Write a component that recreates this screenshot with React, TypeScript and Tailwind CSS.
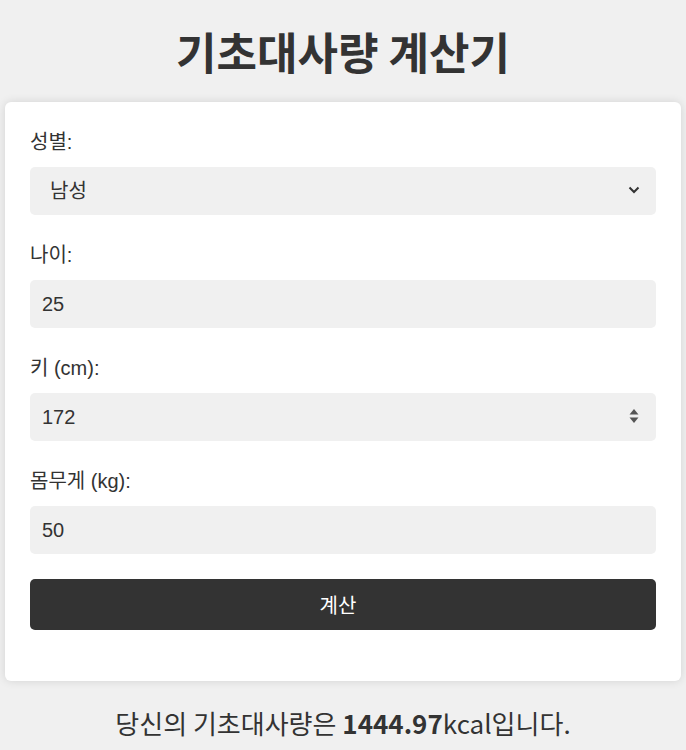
import React from "react";

const font = { fontFamily: '"Liberation Sans", "Noto Sans CJK KR", sans-serif' };

function Field({ label, children, last }: { label: React.ReactNode; children: React.ReactNode; last?: boolean }) {
  return (
    <div className={last ? "mb-[25px]" : "mb-[28px]"}>
      <div className="text-[20px] leading-[24px] mb-[13px] text-[#333]">{label}</div>
      {children}
    </div>
  );
}

function Box({ value, right, pad = "pl-[12px]" }: { value: string; right?: React.ReactNode; pad?: string }) {
  return (
    <div className={`relative h-[48px] rounded-[5px] bg-[#f0f0f0] flex items-center ${pad} text-[20px] text-[#333]`}>
      <input
        readOnly
        value={value}
        className="w-full bg-transparent outline-none border-0 p-0 text-[20px] text-[#333]"
        style={font}
      />
      {right}
    </div>
  );
}

export default function App() {
  return (
    <div className="min-h-[750px] bg-[#f0f0f0] text-[#333]" style={font}>
      <h1
        className="text-center text-[44px] leading-[48px] font-bold pt-[27px] mb-[27px] text-[#333]"
        style={{ fontFamily: '"Noto Sans CJK KR", sans-serif' }}
      >
        기초대사량 계산기
      </h1>
      <div className="mx-[5px] bg-white rounded-[6px] shadow-[0_0_10px_rgba(0,0,0,0.12)] px-[25px] pt-[28px] pb-[51px]">
        <Field label="성별:">
          <Box
            value="남성"
            pad="pl-[20px]"
            right={
              <svg className="absolute right-[16px] top-[19px]" width="12" height="8" viewBox="0 0 12 8">
                <path d="M1.5 1.5 L6 6 L10.5 1.5" fill="none" stroke="#333" strokeWidth="2" />
              </svg>
            }
          />
        </Field>
        <Field label="나이:">
          <Box value="25" />
        </Field>
        <Field label="키 (cm):">
          <Box
            value="172"
            right={
              <svg className="absolute right-[17px] top-[15px]" width="10" height="16" viewBox="0 0 10 16">
                <path d="M5 1 L9.5 6.5 L0.5 6.5 Z" fill="#555" />
                <path d="M5 15 L9.5 9.5 L0.5 9.5 Z" fill="#555" />
              </svg>
            }
          />
        </Field>
        <Field label="몸무게 (kg):" last>
          <Box value="50" />
        </Field>
        <button
          className="w-full h-[51px] rounded-[5px] bg-[#333] text-white text-[20px] flex items-center justify-center pr-[10px]"
          style={{ fontFamily: '"Noto Sans CJK KR", sans-serif' }}
        >
          계산
        </button>
      </div>
      <div
        className="text-center text-[26px] leading-[32px] mt-[26px] text-[#333]"
        style={{ fontFamily: '"Noto Sans CJK KR", sans-serif' }}
      >
        당신의 기초대사량은 <span className="font-bold">1444.97</span>kcal입니다.
      </div>
    </div>
  );
}
